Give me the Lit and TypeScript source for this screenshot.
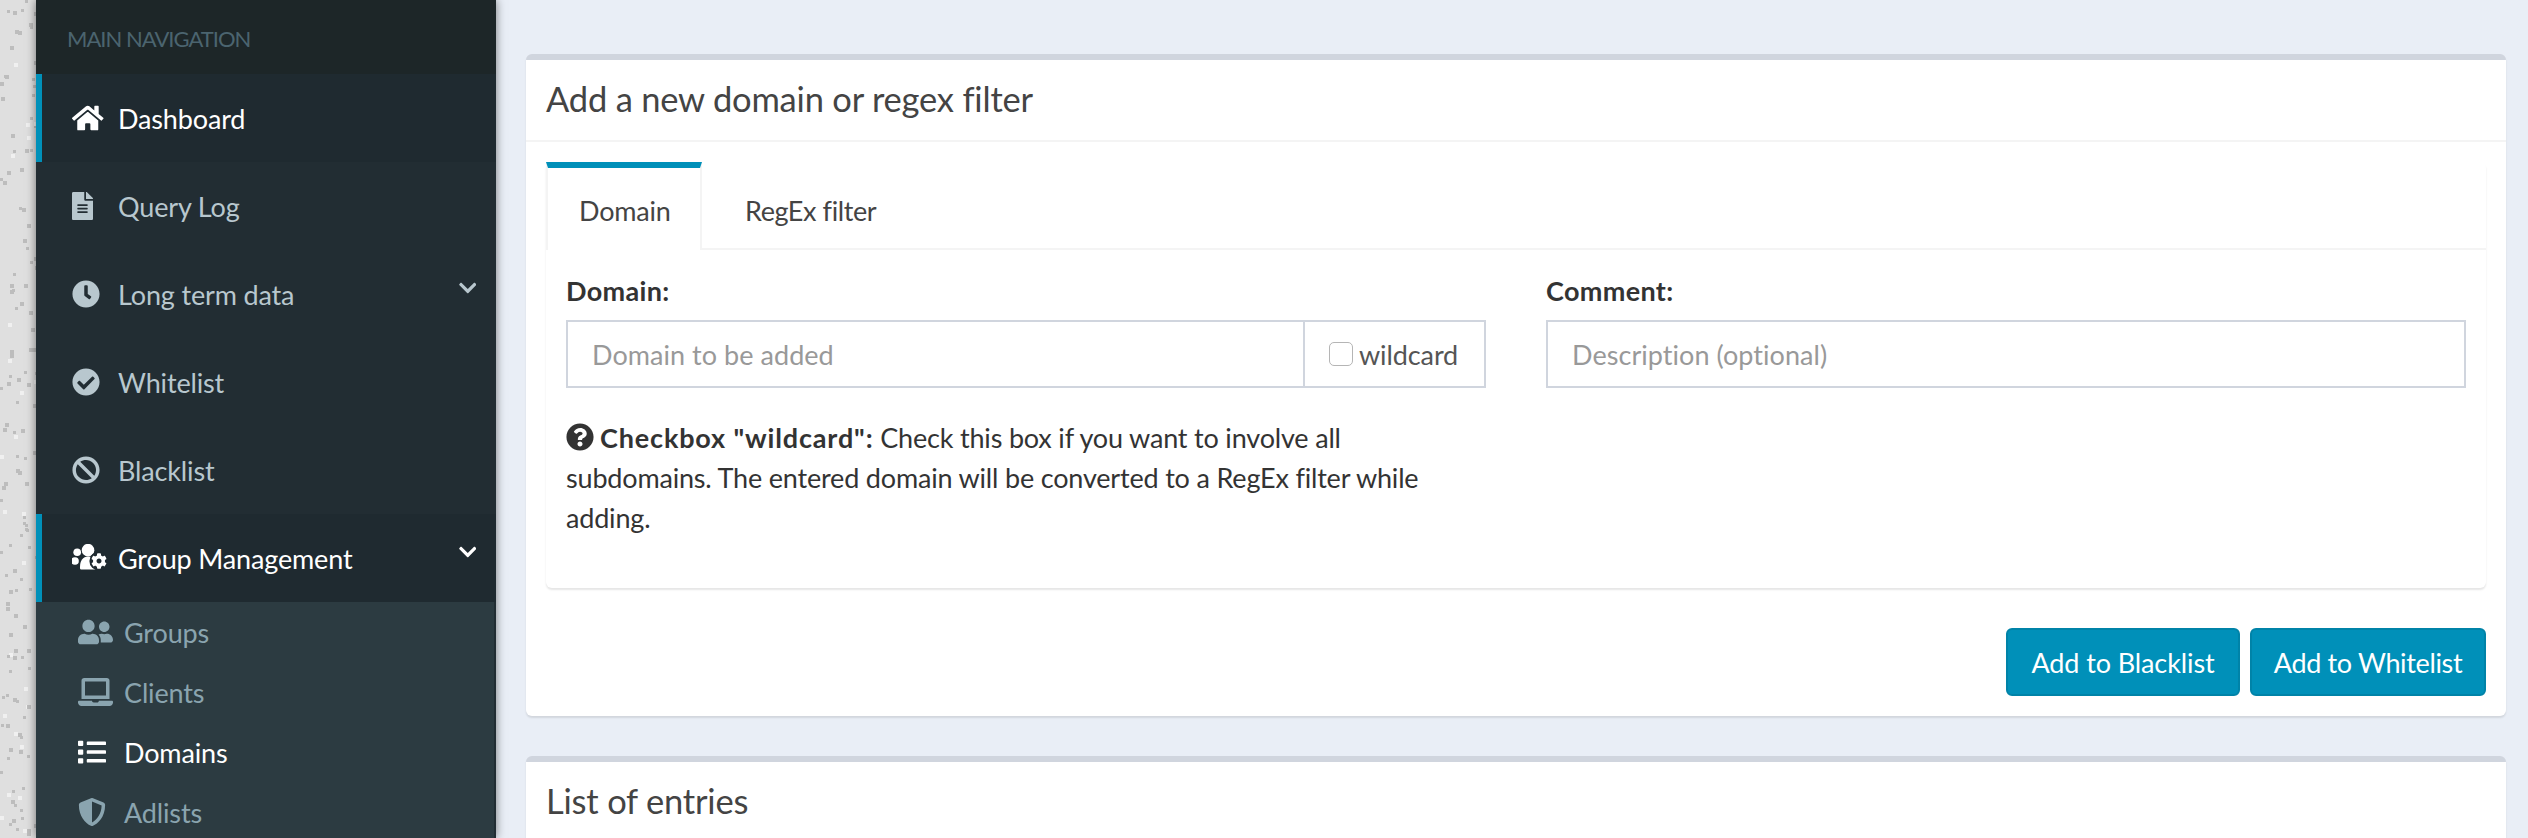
import { LitElement, html, css, svg } from "lit";
import { customElement } from "lit/decorators.js";

const P: Record<string, [number, string]> = {
  home: [576, "M280.37 148.26L96 300.11V464a16 16 0 0 0 16 16l112.06-.29a16 16 0 0 0 15.92-16V368a16 16 0 0 1 16-16h64a16 16 0 0 1 16 16v95.64a16 16 0 0 0 16 16.05L464 480a16 16 0 0 0 16-16V300L295.67 148.26a12.19 12.19 0 0 0-15.3 0zM571.6 251.47L488 182.56V44.05a12 12 0 0 0-12-12h-56a12 12 0 0 0-12 12v72.61L318.47 43a48 48 0 0 0-61 0L4.34 251.47a12 12 0 0 0-1.6 16.9l25.5 31A12 12 0 0 0 45.15 301l235.22-193.74a12.19 12.19 0 0 1 15.3 0L530.9 301a12 12 0 0 0 16.9-1.6l25.5-31a12 12 0 0 0-1.7-16.93z"],
  file: [384, "M224 136V0H24C10.7 0 0 10.7 0 24v464c0 13.3 10.7 24 24 24h336c13.3 0 24-10.7 24-24V160H248c-13.2 0-24-10.8-24-24zm64 236c0 6.6-5.4 12-12 12H108c-6.6 0-12-5.4-12-12v-8c0-6.6 5.4-12 12-12h168c6.6 0 12 5.4 12 12v8zm0-64c0 6.6-5.4 12-12 12H108c-6.6 0-12-5.4-12-12v-8c0-6.6 5.4-12 12-12h168c6.6 0 12 5.4 12 12v8zm0-72v8c0 6.6-5.4 12-12 12H108c-6.6 0-12-5.4-12-12v-8c0-6.6 5.4-12 12-12h168c6.6 0 12 5.4 12 12zm96-114.1v6.1H256V0h6.1c6.4 0 12.5 2.5 17 7l97.9 98c4.5 4.5 7 10.6 7 16.9z"],
  clock: [512, "M256,8C119,8,8,119,8,256S119,504,256,504,504,393,504,256,393,8,256,8Zm92.49,313h0l-20,25a16,16,0,0,1-22.49,2.5h0l-67-49.72a40,40,0,0,1-15-31.23V112a16,16,0,0,1,16-16h32a16,16,0,0,1,16,16V256l58,42.5A16,16,0,0,1,348.49,321Z"],
  check: [512, "M504 256c0 136.967-111.033 248-248 248S8 392.967 8 256 119.033 8 256 8s248 111.033 248 248zM227.314 387.314l184-184c6.248-6.248 6.248-16.379 0-22.627l-22.627-22.627c-6.248-6.249-16.379-6.249-22.628 0L216 308.118l-70.059-70.059c-6.248-6.248-16.379-6.248-22.628 0l-22.627 22.627c-6.248 6.248-6.248 16.379 0 22.627l104 104c6.249 6.249 16.379 6.249 22.628.001z"],
  ban: [512, "M256 8C119.034 8 8 119.033 8 256s111.034 248 248 248 248-111.034 248-248S392.967 8 256 8zm130.108 117.892c65.448 65.448 70 165.481 20.677 235.637L150.47 105.216c70.204-49.356 170.226-44.735 235.638 20.676zM125.892 386.108c-65.448-65.448-70-165.481-20.677-235.637L361.53 406.784c-70.203 49.356-170.226 44.736-235.638-20.676z"],
  friends: [640, "M192 256c61.9 0 112-50.1 112-112S253.9 32 192 32 80 82.1 80 144s50.1 112 112 112zm76.8 32h-8.3c-20.8 10-43.9 16-68.5 16s-47.6-6-68.5-16h-8.3C51.6 288 0 339.6 0 403.2V432c0 26.5 21.5 48 48 48h288c26.5 0 48-21.5 48-48v-28.8c0-63.6-51.6-115.2-115.2-115.2zM480 256c53 0 96-43 96-96s-43-96-96-96-96 43-96 96 43 96 96 96zm48 32h-3.8c-13.9 4.8-28.6 8-44.2 8s-30.3-3.2-44.2-8H432c-20.4 0-39.2 5.9-55.7 15.4 24.4 26.3 39.7 61.2 39.7 99.8v38.4c0 2.2-.5 4.3-.6 6.4H592c26.5 0 48-21.5 48-48 0-61.9-50.1-112-112-112z"],
  laptop: [640, "M624 416H381.54c-.74 19.81-14.71 32-32.74 32H288c-18.69 0-33.02-17.47-32.77-32H16c-8.8 0-16 7.2-16 16v16c0 35.2 28.8 64 64 64h512c35.2 0 64-28.8 64-64v-16c0-8.8-7.2-16-16-16zM576 48c0-26.4-21.6-48-48-48H112C85.6 0 64 21.6 64 48v336h512V48zm-64 272H128V64h384v256z"],
  list: [512, "M80 368H16a16 16 0 0 0-16 16v64a16 16 0 0 0 16 16h64a16 16 0 0 0 16-16v-64a16 16 0 0 0-16-16zm0-320H16A16 16 0 0 0 0 64v64a16 16 0 0 0 16 16h64a16 16 0 0 0 16-16V64a16 16 0 0 0-16-16zm0 160H16a16 16 0 0 0-16 16v64a16 16 0 0 0 16 16h64a16 16 0 0 0 16-16v-64a16 16 0 0 0-16-16zm416 176H176a16 16 0 0 0-16 16v32a16 16 0 0 0 16 16h320a16 16 0 0 0 16-16v-32a16 16 0 0 0-16-16zm0-320H176a16 16 0 0 0-16 16v32a16 16 0 0 0 16 16h320a16 16 0 0 0 16-16V80a16 16 0 0 0-16-16zm0 160H176a16 16 0 0 0-16 16v32a16 16 0 0 0 16 16h320a16 16 0 0 0 16-16v-32a16 16 0 0 0-16-16z"],
  shield: [512, "M466.5 83.7l-192-80a48.15 48.15 0 0 0-36.9 0l-192 80C27.7 91.1 16 108.6 16 128c0 198.5 114.5 335.7 221.5 380.3 11.8 4.9 25.1 4.9 36.9 0C360.1 472.6 496 349.3 496 128c0-19.4-11.7-36.9-29.5-44.3zM256.1 446.3l-.1-381 175.9 73.3c-3.3 151.4-82.1 261.1-175.8 307.7z"],
  question: [512, "M504 256c0 136.997-111.043 248-248 248S8 392.997 8 256C8 119.083 119.043 8 256 8s248 111.083 248 248zM262.655 90c-54.497 0-89.255 22.957-116.549 63.758-3.536 5.286-2.353 12.415 2.715 16.258l34.699 26.31c5.205 3.947 12.621 3.008 16.665-2.122 17.864-22.658 30.113-35.797 57.303-35.797 20.429 0 45.698 13.148 45.698 32.958 0 14.976-12.363 22.667-32.534 33.976C247.128 238.528 216 254.941 216 296v4c0 6.627 5.373 12 12 12h56c6.627 0 12-5.373 12-12v-1.333c0-28.462 83.186-29.647 83.186-106.667 0-58.002-60.165-102-116.531-102zM256 338c-25.365 0-46 20.635-46 46 0 25.364 20.635 46 46 46s46-20.636 46-46c0-25.365-20.635-46-46-46z"],
  chevron: [448, "M207.029 381.476L12.686 187.132c-9.373-9.373-9.373-24.569 0-33.941l22.667-22.667c9.357-9.357 24.522-9.375 33.901-.04L224 284.505l154.745-154.021c9.379-9.335 24.544-9.317 33.901.04l22.667 22.667c9.373 9.373 9.373 24.569 0 33.941L240.971 381.476c-9.373 9.372-24.569 9.372-33.942 0z"],
};
const COG = "M487.4 315.7l-42.6-24.6c4.3-23.2 4.3-47 0-70.2l42.6-24.6c4.9-2.8 7.1-8.6 5.5-14-11.1-35.6-30-67.8-54.7-94.6-3.8-4.1-10-5.1-14.8-2.3L380.8 110c-17.9-15.4-38.5-27.3-60.8-35.1V25.8c0-5.6-3.9-10.5-9.4-11.7-36.7-8.2-74.3-7.8-109.2 0-5.5 1.2-9.4 6.1-9.4 11.7V75c-22.2 7.9-42.8 19.8-60.8 35.1L88.7 85.5c-4.9-2.8-11-1.9-14.8 2.3-24.7 26.7-43.6 58.9-54.7 94.6-1.7 5.4.6 11.2 5.5 14L67.3 221c-4.3 23.2-4.3 47 0 70.2l-42.6 24.6c-4.9 2.8-7.1 8.6-5.5 14 11.1 35.6 30 67.8 54.7 94.6 3.8 4.1 10 5.1 14.8 2.3l42.6-24.6c17.9 15.4 38.5 27.3 60.8 35.1v49.2c0 5.6 3.9 10.5 9.4 11.7 36.7 8.2 74.3 7.8 109.2 0 5.5-1.2 9.4-6.1 9.4-11.7v-49.2c22.2-7.9 42.8-19.8 60.8-35.1l42.6 24.6c4.9 2.8 11 1.9 14.8-2.3 24.7-26.7 43.6-58.9 54.7-94.6 1.5-5.5-.7-11.3-5.6-14.1zM256 336c-44.1 0-80-35.9-80-80s35.9-80 80-80 80 35.9 80 80-35.9 80-80 80z";

const icon = (n: string, size = 28) => {
  const [w, d] = P[n];
  return html`<svg class="ic" viewBox="0 0 ${w} 512" style="width:${(w / 512) * size}px;height:${size}px" fill="currentColor"><path d=${d}></path></svg>`;
};
const usersCog = html`<svg class="ic" viewBox="0 0 640 512" style="width:35px;height:28px" fill="currentColor">
  <circle cx="293" cy="112" r="115"></circle>
  <circle cx="95" cy="150" r="70"></circle>
  <circle cx="55" cy="310" r="70"></circle>
  <path d="M146 420c0-110 50-190 150-190 110 0 170 80 170 190v30c0 10-8 18-18 18H178c-20 0-32-14-32-30z"></path>
  <circle cx="494" cy="312" r="176" fill="#1f2a30"></circle>
  ${svg`<path transform="translate(348 166) scale(.57)" d=${COG}></path>`}
</svg>`;

const NOISE = (() => {
  const out: [number, number, number, number][] = [];
  let s = 12345;
  const r = () => ((s = (s * 1664525 + 1013904223) >>> 0) / 4294967296);
  for (let i = 0; i < 150; i++) {
    const light = r() < 0.22;
    out.push([Math.floor(r() * 36), Math.floor(r() * 838), light ? 4 : 3 + Math.floor(r() * 2), light ? 1 : 0]);
  }
  return out;
})();

@customElement("app-root")
export class AppRoot extends LitElement {
  static styles = css`
    :host { display: flex; width: 2528px; height: 838px; overflow: hidden; background: #e9eef6;
      font-family: "Lato", "Noto Sans", sans-serif; font-size: 27px; color: #333; letter-spacing: -.1px; }
    .ic { flex: none; display: block; }
    .strip { width: 36px; flex: none; background: #dfdfdf; }
    .strip svg { display: block; filter: blur(.6px); }
    .side { width: 460px; flex: none; background: #222d33; box-shadow: 0 0 9px rgba(0,0,0,.5); position: relative; letter-spacing: -.15px; }
    .head { height: 74px; box-sizing: border-box; background: #1d2628; color: #4b646f; font-size: 22px; padding: 27px 0 0 31px; line-height: 24px; letter-spacing: -1px; }
    .item { display: flex; align-items: center; height: 88px; box-sizing: border-box; padding-left: 30px; color: #b8c7ce; border-left: 6px solid transparent; }
    .item.on { color: #fff; background: #1f2a30; border-left-color: #0090b9; }
    .box { width: 46px; flex: none; }
    .chev { margin-left: auto; margin-right: 20px; margin-bottom: 13px; }
    .sub { background: #2c3b41; margin-right: 2px; color: #8aa4af; }
    .sub .row { display: flex; align-items: center; height: 60px; padding-left: 42px; }
    .sub .row.on { color: #fff; }
    .main { flex: 1; min-width: 0; padding: 54px 22px 0 30px; }
    .card { background: #fff; border-top: 6px solid #d0d5de; border-radius: 6px; box-shadow: 0 2px 2px rgba(0,0,0,.1); margin-bottom: 40px; }
    .card-h { height: 82px; box-sizing: border-box; padding: 0 20px; border-bottom: 2px solid #f4f4f4; font-size: 34.5px; line-height: 78px; color: #444; letter-spacing: -.2px; }
    .card-b { padding: 20px; }
    .tabs { background: #fff; border-radius: 6px; box-shadow: 0 2px 2px rgba(0,0,0,.1); }
    .tab-bar { display: flex; height: 88px; box-sizing: border-box; border-bottom: 2px solid #f4f4f4; }
    .tab { height: 88px; box-sizing: border-box; padding: 0 32px 0 43px; line-height: 98px; color: #444; letter-spacing: -.4px; }
    .tab.on { width: 156px; padding: 0 0 0 31px; border-top: 6px solid #0090b9; border-right: 2px solid #f4f4f4; border-left: 2px solid #f4f4f4; background: #fff; line-height: 86px; letter-spacing: -.2px; }
    .pane { display: grid; grid-template-columns: 920px 920px; gap: 60px; padding: 20px 20px 0; height: 338px; box-sizing: border-box; }
    label.l { display: block; font-weight: 700; line-height: 42px; height: 50px; color: #333; letter-spacing: .35px; }
    .group { display: flex; height: 68px; box-sizing: border-box; border: 2px solid #d0d5de; }
    .ph { flex: 1; padding-left: 24px; line-height: 65px; color: #999; letter-spacing: .05px; }
    .addon { display: flex; align-items: center; border-left: 2px solid #d0d5de; padding: 0 0 0 24px; color: #555; width: 181px; box-sizing: border-box; }
    .cb { width: 24px; height: 24px; box-sizing: border-box; border: 1.5px solid #b5b5b5; border-radius: 5px; margin-right: 6px; flex: none; background: #fff; }
    .help { margin-top: 30px; line-height: 40px; white-space: nowrap; color: #333; letter-spacing: -.18px; }
    .help b { font-weight: 700; letter-spacing: .85px; }
    .help .q { display: inline-block; vertical-align: -3px; margin-right: 6px; }
    .foot { display: flex; justify-content: flex-end; gap: 10px; padding-top: 40px; }
    .btn { height: 68px; box-sizing: border-box; border: 2px solid #0083a8; border-radius: 6px; background: #0090b9; color: #fff; line-height: 65px; text-align: center; }
    .btn.a { width: 234px; } .btn.b { width: 236px; letter-spacing: -.35px; }
    .list-h { font-size: 34.5px; color: #444; padding: 0 20px; line-height: 78px; height: 82px; letter-spacing: -.2px; }
  `;
  render() {
    const items: [string, string, boolean, boolean][] = [
      ["home", "Dashboard", true, false],
      ["file", "Query Log", false, false],
      ["clock", "Long term data", false, true],
      ["check", "Whitelist", false, false],
      ["ban", "Blacklist", false, false],
    ];
    return html`
      <div class="strip"><svg width="36" height="838">${NOISE.map(([x, y, w, l]) => svg`<rect x=${x} y=${y} width=${w} height=${w} fill=${l ? "#f0f0f0" : "#bdbdbd"}></rect>`)}</svg></div>
      <nav class="side">
        <div class="head">MAIN NAVIGATION</div>
        ${items.map(([i, t, on, ch]) => html`<div class="item ${on ? "on" : ""}"><span class="box">${icon(i)}</span>${t}${ch ? html`<span class="chev">${icon("chevron", 20)}</span>` : ""}</div>`)}
        <div class="item on"><span class="box">${usersCog}</span>Group Management<span class="chev">${icon("chevron", 20)}</span></div>
        <div class="sub">
          <div class="row"><span class="box">${icon("friends")}</span>Groups</div>
          <div class="row"><span class="box">${icon("laptop")}</span>Clients</div>
          <div class="row on"><span class="box">${icon("list")}</span>Domains</div>
          <div class="row"><span class="box">${icon("shield")}</span>Adlists</div>
        </div>
      </nav>
      <main class="main">
        <section class="card">
          <div class="card-h">Add a new domain or regex filter</div>
          <div class="card-b">
            <div class="tabs">
              <div class="tab-bar"><div class="tab on">Domain</div><div class="tab">RegEx filter</div></div>
              <div class="pane">
                <div>
                  <label class="l">Domain:</label>
                  <div class="group"><div class="ph">Domain to be added</div><div class="addon"><span class="cb"></span>wildcard</div></div>
                  <div class="help"><span class="q">${icon("question")}</span><b>Checkbox "wildcard":</b> Check this box if you want to involve all<br>subdomains. The entered domain will be converted to a RegEx filter while<br>adding.</div>
                </div>
                <div>
                  <label class="l">Comment:</label>
                  <div class="group"><div class="ph">Description (optional)</div></div>
                </div>
              </div>
            </div>
            <div class="foot"><div class="btn a">Add to Blacklist</div><div class="btn b">Add to Whitelist</div></div>
          </div>
        </section>
        <section class="card"><div class="list-h">List of entries</div></section>
      </main>
    `;
  }
}
